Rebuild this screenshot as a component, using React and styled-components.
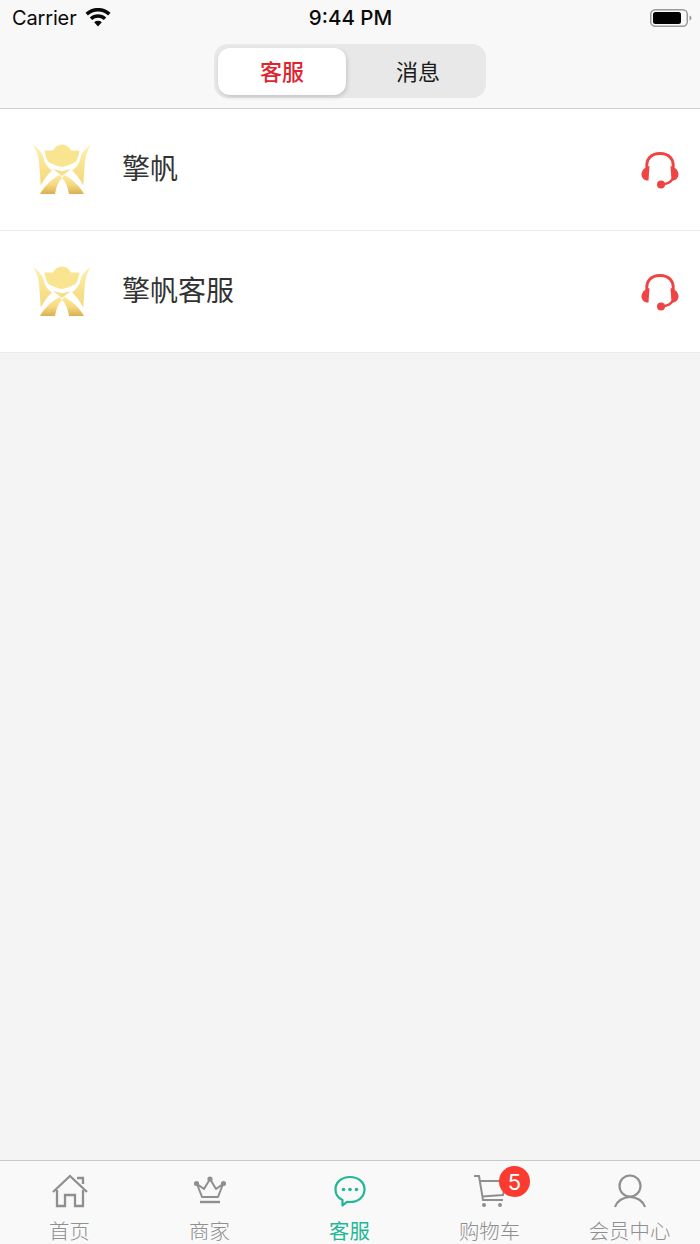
import React from "react";
import styled, { createGlobalStyle } from "styled-components";

const Global = createGlobalStyle`
  html, body { margin: 0; padding: 0; background: #f4f4f4; }
  body { font-family: "Liberation Sans", "Noto Sans CJK SC", sans-serif; }
`;
const CJK = `"Noto Sans CJK SC", "Noto Sans CJK TC", sans-serif`;

const Page = styled.div`
  width: 700px; height: 1244px; display: flex; flex-direction: column; overflow: hidden; background: #f4f4f4;
`;
const Header = styled.header`
  height: 108px; flex: none; background: #f8f8f8; border-bottom: 1px solid #cfcfcf; display: flex; flex-direction: column;
`;
const StatusBar = styled.div`
  height: 36px; padding: 0 8px 1px 12px; box-sizing: border-box; display: grid; grid-template-columns: 1fr auto 1fr; align-items: center; color: #0a0a0a;
`;
const Carrier = styled.div`
  display: flex; align-items: center; gap: 8px; font: 20px "Inter", "Liberation Sans", sans-serif; letter-spacing: -0.15px;
`;
const Clock = styled.div`
  font: 500 20.5px "Inter", "Liberation Sans", sans-serif; margin-left: -3px;
`;
const BatteryWrap = styled.div`
  justify-self: end; display: flex;
`;
const NavWrap = styled.div`
  flex: 1; display: flex; justify-content: center; padding-top: 8px;
`;
const Segment = styled.div`
  width: 272px; height: 54px; box-sizing: border-box; padding: 4px 4px 3px; background: #e8e8e8; border-radius: 14px; display: flex;
`;
const SegButton = styled.div`
  flex: none; width: ${p => (p.$active ? 128 : 144)}px; height: 47px; display: flex; align-items: center; justify-content: center;
  font: ${p => (p.$active ? 500 : 400)} 22px/26px ${CJK};
  padding-bottom: 3px; box-sizing: border-box;
  color: ${p => (p.$active ? "#e0242f" : "#1a1a1a")};
  background: ${p => (p.$active ? "#fff" : "transparent")};
  border-radius: 12px;
  box-shadow: ${p => (p.$active ? "1px 2px 4px rgba(0,0,0,.16)" : "none")};
`;
const List = styled.main`
  flex: 1; display: flex; flex-direction: column;
`;
const Row = styled.div`
  height: 121px; flex: none; background: #fff; border-bottom: 1px solid #ececec; display: flex; align-items: center; padding: 0 21px 0 32px;
`;
const Name = styled.div`
  margin-left: 30px; flex: 1; font: 400 28px ${CJK}; color: #333; padding-bottom: 6px;
`;
const TabBar = styled.nav`
  height: 83px; flex: none; background: #f9f9f9; border-top: 1px solid #c9c9c9; display: grid; grid-template-columns: repeat(5, 1fr);
`;
const Tab = styled.div`
  position: relative; display: flex; flex-direction: column; align-items: center; padding-top: 11px; margin-left: -1px;
  color: ${p => (p.$active ? "#1fb795" : "#8f8f8f")};
`;
const IconBox = styled.div`
  height: 37px; display: flex; align-items: center; justify-content: center;
`;
const TabLabel = styled.div`
  font: ${p => (p.$active ? 400 : 300)} 20.4px/24px ${CJK}; margin-top: 9px; white-space: nowrap;
`;
const Badge = styled.div`
  position: absolute; top: 5px; left: 80px; width: 31px; height: 31px; border-radius: 50%; background: #fb3a30; color: #fff;
  display: flex; align-items: center; justify-content: center; font: 400 22px "Inter", "Liberation Sans", sans-serif;
`;

const Wifi = () => (
  <svg width="26" height="19" viewBox="0 0 26 19">
    <path d="M13 18.500 9.200 14.200a5.600 5.600 0 0 1 7.600 0Z" fill="#0a0a0a" />
    <path d="M7.200 12 4.800 9.400a12 12 0 0 1 16.400 0L18.800 12a8.600 8.600 0 0 0-11.600 0Z" fill="#0a0a0a" />
    <path d="M2.900 7.400.5 4.800a18.400 18.400 0 0 1 25 0l-2.400 2.600a15 15 0 0 0-20.200 0Z" fill="#0a0a0a" />
  </svg>
);
const Battery = () => (
  <svg width="42" height="20" viewBox="0 0 42 20">
    <rect x="0.75" y="1.75" width="36.5" height="16.5" rx="4.5" fill="none" stroke="#9a9a9a" strokeWidth="1.5" />
    <rect x="3" y="4" width="28" height="12" rx="2.5" fill="#000" />
    <path d="M39.500 7.500c1.200.4 2 1.300 2 2.500s-.8 2.100-2 2.500Z" fill="#9a9a9a" />
  </svg>
);
const Logo = () => (
  <svg width="60" height="52" viewBox="0 0 60 52">
    <defs>
      <linearGradient id="gold" x1="0" y1="0" x2="0" y2="1">
        <stop offset="0" stopColor="#fbe99c" />
        <stop offset=".5" stopColor="#f6da82" />
        <stop offset="1" stopColor="#d9b052" />
      </linearGradient>
      <linearGradient id="wing" x1="0" y1="0" x2="0" y2="1">
        <stop offset="0" stopColor="#fdf0b4" />
        <stop offset=".5" stopColor="#f9e38f" />
        <stop offset="1" stopColor="#f3d77f" />
      </linearGradient>
    </defs>
    <path d="M12.500 6.500H21C23 2.500 26 .5 30 .5s7 2 9 6h8.500C46.500 12 45.500 15.500 43.500 18 39 20.500 34 22.500 30 23 26 22.500 21 20.500 16.500 18 14.500 15.500 13.500 12 12.500 6.500Z" fill="#f9e48f" />
    <path d="M.5 .5C5 6 7 13 7.500 24 8 31 8.500 36 8.700 41.500 12 35 16 30 20 26.500 15 23 12.500 19 11.500 14 10.500 9 6 4 .5 .5Z" fill="url(#wing)" />
    <path d="M59.500 .5C55 6 53 13 52.500 24 52 31 51.500 36 51.300 41.500 48 35 44 30 40 26.500 45 23 47.500 19 48.500 14 49.500 9 54 4 59.500 .5Z" fill="url(#wing)" />
    <path d="M21 25 30 27.300 39 25 30 32Z" fill="#f7df8a" />
    <path d="M8 50C11 44 18 36 27.500 31L30 34C26 38 24 44 23 50Z" fill="url(#gold)" />
    <path d="M52 50C49 44 42 36 32.500 31L30 34C34 38 36 44 37 50Z" fill="url(#gold)" />
  </svg>
);
const Headset = () => (
  <svg width="38" height="38" viewBox="0 0 38 38" fill="#ee4444">
    <path d="M6 18C4.500 8 10 2.500 19 2.500S33.500 8 32 18" fill="none" stroke="#ee4444" strokeWidth="3" />
    <path d="M8.500 15C3.500 16 .5 20 .5 23.500.5 27 3.500 30 7.500 29.500Z" />
    <path d="M29.500 15C34.500 16 37.500 20 37.500 23.500 37.500 27 34.500 30 30.500 29.500Z" />
    <path d="M31.500 28c-1.500 3-5 5-11 5.500" fill="none" stroke="#ee4444" strokeWidth="2.500" />
    <circle cx="20" cy="33.500" r="4" />
  </svg>
);
const HomeIcon = () => (
  <svg width="36" height="34" viewBox="0 0 36 34" fill="none" stroke="currentColor" strokeWidth="2.300">
    <path d="M1 18 18 2l17 16" />
    <path d="M5 16v16h8V21h10v11h8V16" />
    <path d="M25 4h6v6" />
  </svg>
);
const CrownIcon = () => (
  <svg width="32" height="30" viewBox="0 0 32 30" fill="none" stroke="currentColor" strokeWidth="2">
    <path d="M3 8 8 21h16l5-13-7 5-6-10-6 10Z" strokeLinejoin="round" />
    <path d="M6 26h20" strokeWidth="2.400" />
    <circle cx="16" cy="3" r="1.600" fill="currentColor" />
    <circle cx="2.500" cy="7.500" r="1.600" fill="currentColor" />
    <circle cx="29.500" cy="7.500" r="1.600" fill="currentColor" />
  </svg>
);
const ChatIcon = () => (
  <svg width="32" height="32" viewBox="0 0 32 32" fill="none" stroke="currentColor" strokeWidth="2.200">
    <path d="M16 2c8 0 14.500 5 14.500 12.500S24 27 16 27c-1 0-2 0-3-.2L8.500 30.500v-5.500C4 23 1.500 19 1.500 14.500 1.500 7 8 2 16 2Z" strokeLinejoin="round" />
    <circle cx="9.500" cy="14.500" r="1.800" fill="currentColor" stroke="none" />
    <circle cx="16" cy="14.500" r="1.800" fill="currentColor" stroke="none" />
    <circle cx="22.500" cy="14.500" r="1.800" fill="currentColor" stroke="none" />
  </svg>
);
const CartIcon = () => (
  <svg width="34" height="34" viewBox="0 0 34 34" fill="none" stroke="currentColor" strokeWidth="2">
    <path d="M1 2h5l4 24h20" />
    <path d="M7 7h26l-3 14-21 1.500" />
    <circle cx="11" cy="31" r="2" fill="currentColor" stroke="none" />
    <circle cx="27" cy="31" r="2" fill="currentColor" stroke="none" />
  </svg>
);
const UserIcon = () => (
  <svg width="32" height="34" viewBox="0 0 32 34" fill="none" stroke="currentColor" strokeWidth="2.200">
    <circle cx="16" cy="12" r="10.500" />
    <path d="M1 33c2-6 8-10 15-10s13 4 15 10" />
  </svg>
);

const rows = ["擎帆", "擎帆客服"];
const tabs = [
  { label: "首页", Icon: HomeIcon },
  { label: "商家", Icon: CrownIcon },
  { label: "客服", Icon: ChatIcon, active: true },
  { label: "购物车", Icon: CartIcon, badge: 5 },
  { label: "会员中心", Icon: UserIcon },
];

export default function App() {
  return (
    <Page>
      <Global />
      <Header>
        <StatusBar>
          <Carrier>Carrier <Wifi /></Carrier>
          <Clock>9:44 PM</Clock>
          <BatteryWrap><Battery /></BatteryWrap>
        </StatusBar>
        <NavWrap>
          <Segment>
            <SegButton $active>客服</SegButton>
            <SegButton>消息</SegButton>
          </Segment>
        </NavWrap>
      </Header>
      <List>
        {rows.map(r => (
          <Row key={r}>
            <Logo />
            <Name>{r}</Name>
            <Headset />
          </Row>
        ))}
      </List>
      <TabBar>
        {tabs.map(({ label, Icon, active, badge }) => (
          <Tab key={label} $active={active}>
            <IconBox><Icon /></IconBox>
            <TabLabel $active={active}>{label}</TabLabel>
            {badge && <Badge>{badge}</Badge>}
          </Tab>
        ))}
      </TabBar>
    </Page>
  );
}
